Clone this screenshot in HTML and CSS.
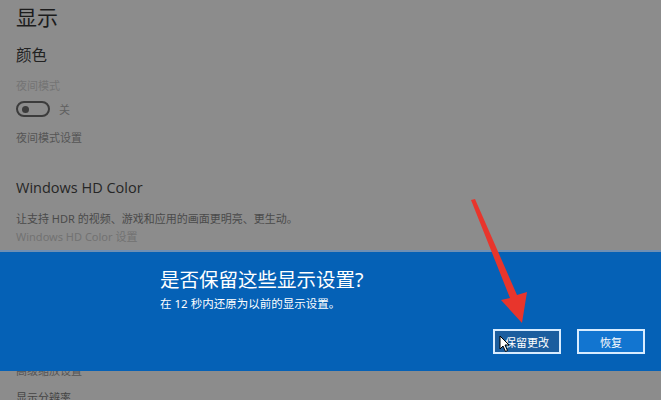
FILE: index.html
```html
<!DOCTYPE html>
<html lang="zh-CN">
<head>
<meta charset="utf-8">
<title>显示</title>
<link rel="stylesheet" href="styles.css">
</head>
<body>
<main class="page">
  <h1 class="title">显示</h1>
  <h2 class="section">颜色</h2>
  <div class="label">夜间模式</div>
  <div class="toggle-row">
    <span class="toggle"><span class="knob"></span></span>
    <span class="toggle-text">关</span>
  </div>
  <div class="link dark">夜间模式设置</div>
  <h2 class="section hd">Windows HD Color</h2>
  <p class="desc">让支持 HDR 的视频、游戏和应用的画面更明亮、更生动。</p>
  <div class="link light">Windows HD Color 设置</div>
  <h2 class="section hidden-sec">缩放与布局</h2>
  <div class="label">更改文本、应用等项目的大小</div>
  <div class="select">100% (推荐)</div>
  <div class="link dark small">高级缩放设置</div>
  <div class="label dark2">显示分辨率</div>
</main>

<section class="dialog">
  <div class="dialog-body">
    <div class="dialog-title">是否保留这些显示设置?</div>
    <div class="dialog-sub">在 12 秒内还原为以前的显示设置。</div>
  </div>
  <div class="dialog-actions">
    <button class="btn keep">保留更改</button>
    <button class="btn revert">恢复</button>
  </div>
</section>

<svg class="arrow" width="661" height="400" viewBox="0 0 661 400">
  <polygon points="471,200 475,199 517,295 527,292 522,323 501,300 510,298" fill="#e8352c"/>
</svg>
<svg class="cursor" width="12" height="18" viewBox="0 0 12 18">
  <path d="M1 1 L1 14 L4 11 L6.5 16.5 L8.5 15.5 L6 10 L10 10 Z" fill="#fff" stroke="#000" stroke-width="1"/>
</svg>
</body>
</html>
```
FILE: styles.css
```css
html, body {
  margin: 0;
  padding: 0;
  width: 661px;
  height: 400px;
  overflow: hidden;
  background: #8c8c8c;
  font-family: "Noto Sans", "Noto Sans CJK SC", sans-serif;
}
.page {
  padding: 2px 0 0 16px;
  display: flex;
  flex-direction: column;
  align-items: flex-start;
}
.title {
  margin: 0;
  font-size: 21px;
  font-weight: 400;
  line-height: 30px;
  color: #1c1c1c;
}
.section {
  margin: 13px 0 0;
  font-size: 15.5px;
  font-weight: 400;
  line-height: 20px;
  color: #222;
}
.label {
  margin-top: 14px;
  font-size: 11px;
  line-height: 14px;
  color: #747474;
}
.toggle-row {
  margin-top: 8px;
  display: flex;
  align-items: center;
  gap: 9px;
}
.toggle {
  height: 12px;
  border: 2px solid #3c3c3c;
  border-radius: 9px;
  display: flex;
  align-items: center;
  padding-left: 4px;
  box-sizing: content-box;
  width: 26px;
}
.knob {
  width: 7px;
  height: 7px;
  border-radius: 50%;
  background: #3c3c3c;
}
.toggle-text {
  font-size: 11px;
  color: #606060;
}
.link {
  font-size: 11px;
  line-height: 14px;
}
.link.dark { margin-top: 14px; color: #555; }
.link.light { margin-top: 4px; color: #727272; }
.section.hd {
  margin-top: 33px;
  font-family: "Open Sans", "Noto Sans CJK SC", sans-serif;
  font-size: 14.5px;
  color: #262626;
}
.desc {
  margin: 14px 0 0;
  font-size: 11px;
  line-height: 14px;
  color: #4a4a4a;
}
.hidden-sec { margin-top: 8px; }
.select {
  margin-top: 8px;
  font-size: 11px;
  padding: 4px 8px;
  border: 2px solid #555;
  width: 160px;
}
.link.small { margin-top: 28px; color: #555; }
.dark2 { margin-top: 13px; color: #444; }

.dialog {
  position: absolute;
  left: 0;
  top: 250px;
  width: 661px;
  height: 119px;
  background: #0561b6;
  border-top: 2px solid #6f8fb3;
  display: flex;
  flex-direction: column;
  justify-content: space-between;
  box-sizing: content-box;
}
.dialog-body {
  padding: 15px 0 0 160px;
  color: #fff;
}
.dialog-title {
  font-size: 19.5px;
  line-height: 26px;
}
.dialog-sub {
  margin-top: 3px;
  font-size: 11.5px;
  line-height: 15px;
}
.dialog-actions {
  display: flex;
  justify-content: flex-end;
  gap: 16px;
  padding: 0 16px 17px 0;
}
.btn {
  width: 68px;
  height: 25px;
  font-family: "Noto Sans", "Noto Sans CJK SC", sans-serif;
  font-size: 11px;
  color: #fff;
  border: 2px solid #d8ecff;
  padding: 0;
  box-sizing: border-box;
}
.btn.keep { background: #1b5d9e; }
.btn.revert { background: #1275d0; }
.arrow {
  position: absolute;
  left: 0;
  top: 0;
  pointer-events: none;
}
.cursor {
  position: absolute;
  left: 499px;
  top: 335px;
}
```
